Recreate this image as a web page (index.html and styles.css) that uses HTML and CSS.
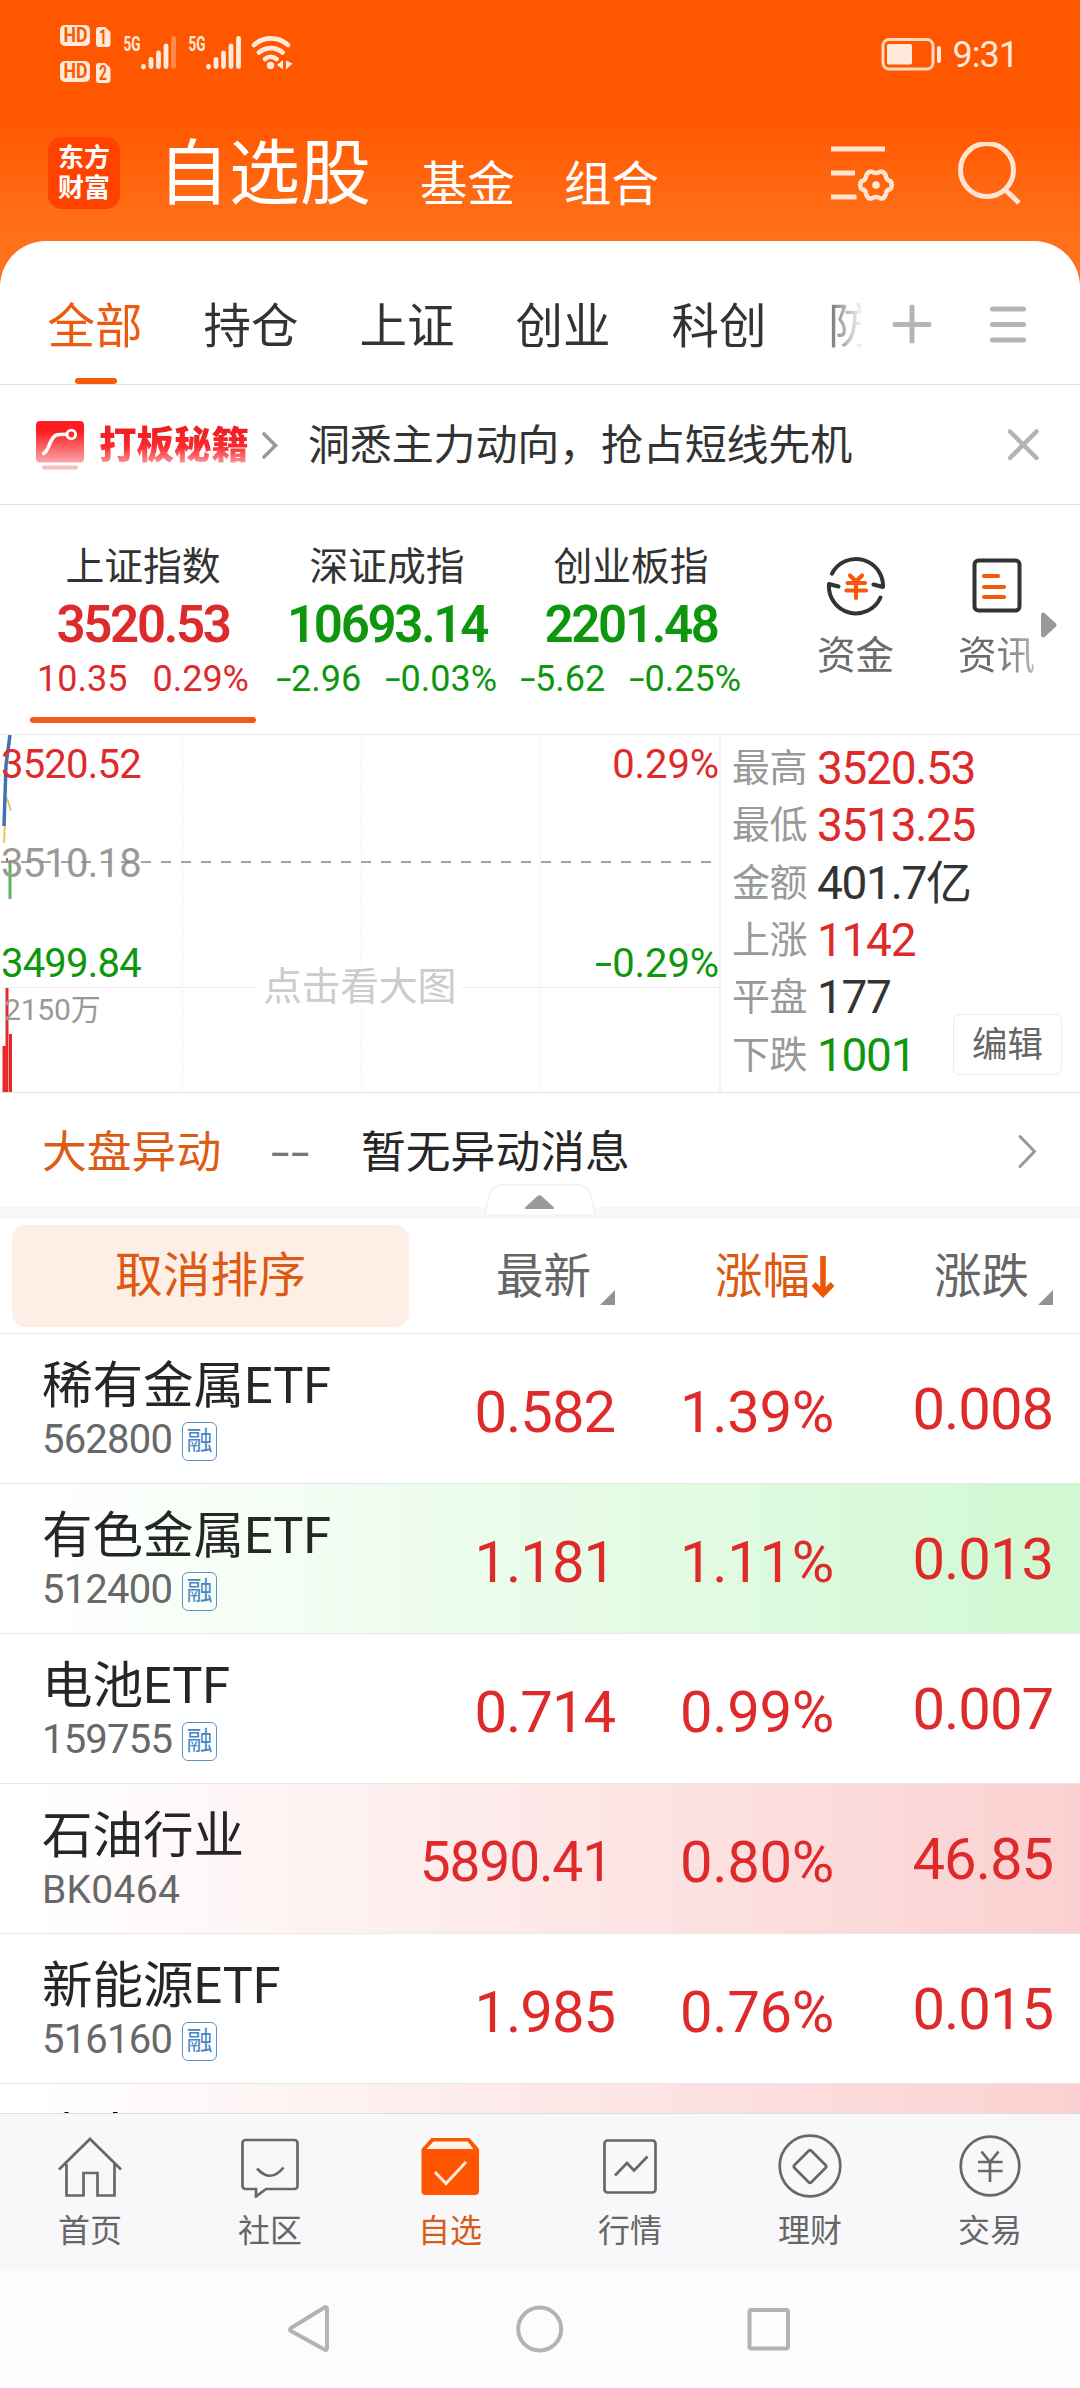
FILE: index.html
```html
<!DOCTYPE html>
<html lang="zh-CN">
<head>
<meta charset="utf-8">
<title>自选股</title>
<link rel="stylesheet" href="styles.css">
</head>
<body>
<div class="app">
  <header class="header">
    <div class="status">
      <svg class="status-left" width="236" height="64" viewBox="58 22 236 64">
        <g class="badge-shape">
          <rect x="60" y="25" width="30" height="21" rx="5"/>
          <path d="M99 27h6l5.500 5v12a3 3 0 0 1-3 3h-8.500a3 3 0 0 1-3-3v-14a3 3 0 0 1 3-3z"/>
          <rect x="60" y="61" width="30" height="21" rx="5"/>
          <path d="M99 63h6l5.500 5v12a3 3 0 0 1-3 3h-8.500a3 3 0 0 1-3-3v-14a3 3 0 0 1 3-3z"/>
        </g>
        <g class="badge-text">
          <text x="63.500" y="42" textLength="24" lengthAdjust="spacingAndGlyphs">HD</text>
          <text x="99" y="43.500" textLength="8" lengthAdjust="spacingAndGlyphs">1</text>
          <text x="63.500" y="78" textLength="24" lengthAdjust="spacingAndGlyphs">HD</text>
          <text x="99" y="79.500" textLength="8" lengthAdjust="spacingAndGlyphs">2</text>
        </g>
        <g class="net-text">
          <text x="123.500" y="51" textLength="17" lengthAdjust="spacingAndGlyphs">5G</text>
          <text x="188.500" y="51" textLength="17" lengthAdjust="spacingAndGlyphs">5G</text>
        </g>
        <g class="bars">
          <path d="M143.500 66.500v.5M151 59.500v7M158.500 53v13.500M166 46v20.500M208.500 66.500v.5M216 59.500v7M223.500 53v13.500M231 46v20.500M238.500 38.500v28"/>
          <path opacity=".35" d="M173.500 38.500v28"/>
        </g>
        <g class="wifi">
          <path d="M254 45a25 25 0 0 1 34 0M259 52.500a18 18 0 0 1 23.500 0M265 59a9 9 0 0 1 11.500 0"/>
          <circle cx="270.500" cy="65.500" r="3.700"/>
          <path class="fill" d="M283 60v9.500l-6-4.500zM286 60.500v9l6.500-6z"/>
        </g>
      </svg>
      <div class="status-right">
        <svg width="60" height="34" viewBox="881 36 60 34">
          <rect class="cell" x="883" y="38.500" width="50" height="29.500" rx="6"/>
          <rect class="solid" x="887" y="43" width="25" height="20.500" rx="2"/>
          <rect class="solid" x="937" y="45" width="4" height="17" rx="2"/>
        </svg>
        <span class="clock">9:31</span>
      </div>
    </div>
    <div class="titlebar">
      <div class="logo"><span>东方</span><span>财富</span></div>
      <h1>自选股</h1>
      <span class="sub">基金</span>
      <span class="sub">组合</span>
      <svg class="head-icons" width="192" height="68" viewBox="829 142 192 68">
        <path class="bar5" d="M831 149h54M831 173h24M831 197h25.500"/>
        <path class="gear" d="M871.500 171.500Q876 174.500 880.500 171.500Q885 171.300 886.200 177.300Q886.700 180.200 890.300 181Q893.400 185 890.300 189Q886.700 189.800 886.200 192.700Q885 198.700 880.500 198.500Q876 195.500 871.500 198.500Q867 198.700 865.800 192.700Q865.300 189.800 861.700 189Q858.600 185 861.700 181Q865.300 180.200 865.800 177.300Q867 171.300 871.500 171.500Z"/>
        <circle class="dot" cx="876" cy="185" r="3.800"/>
        <circle class="lens" cx="987" cy="170" r="26.500"/>
        <path class="lens" d="M1005 189.500l14 13.500"/>
      </svg>
    </div>
  </header>

  <main class="sheet">
    <nav class="tabs">
      <div class="tab-list">
        <a class="active">全部</a><a>持仓</a><a>上证</a><a>创业</a><a>科创</a><a>防</a>
      </div>
      <svg width="140" height="46" viewBox="890 301 140 46">
        <path class="gray5" d="M895 324.500h34M912 307v34M992.500 309h31M992.500 324.500h31M992.500 340h31"/>
      </svg>
    </nav>

    <section class="promo">
      <svg width="50" height="50" viewBox="35 419 50 50">
        <defs><linearGradient id="promoRed" x1="0" y1="0" x2="0" y2="1"><stop offset=".25" stop-color="#fd1c20"/><stop offset="1" stop-color="#fba5a8"/></linearGradient></defs>
        <rect x="36" y="420" width="48" height="41.500" rx="4" fill="url(#promoRed)"/>
        <path d="M43.500 452.500c7-4 5-15 13-18.500q3-.8 10-.8" fill="none" stroke="#fff" stroke-width="3.600" stroke-linecap="round"/>
        <circle cx="71.300" cy="433.500" r="4.300" fill="none" stroke="#fff" stroke-width="2.800"/>
        <rect x="42" y="464.500" width="36" height="4" rx="2" fill="#f8bfc1"/>
      </svg>
      <b class="promo-name">打板秘籍</b>
      <svg class="promo-arrow" width="18" height="30" viewBox="262 430 18 30"><path d="M265 434l11.500 11.500L265 457"/></svg>
      <span class="promo-text">洞悉主力动向，抢占短线先机</span>
      <svg class="close" width="32" height="32" viewBox="1008 430 32 32"><path class="gray4" d="M1011 432.500l26.500 26.500M1037.500 432.500L1011 459"/></svg>
    </section>

    <section class="indices">
      <div class="index on up">
        <span class="index-name">上证指数</span><strong>3520.53</strong>
        <span class="delta"><i>10.35</i><i>0.29%</i></span>
      </div>
      <div class="index down">
        <span class="index-name">深证成指</span><strong>10693.14</strong>
        <span class="delta"><i><em>-</em>2.96</i><i><em>-</em>0.03%</i></span>
      </div>
      <div class="index down">
        <span class="index-name">创业板指</span><strong>2201.48</strong>
        <span class="delta"><i><em>-</em>5.62</i><i><em>-</em>0.25%</i></span>
      </div>
      <div class="tool funds">
        <svg width="62" height="62" viewBox="825 555 62 62">
          <path class="ink" d="M832 573.600A27 27 0 0 1 883 587L873.500 584.500M880.500 597.500A27 27 0 0 1 829 584L838.500 586.500"/>
          <path class="accent" d="M850 575.500l6 6 6-6M847.500 583h17.500M846.500 590.500h19.500M856 582v16"/>
        </svg>
        <span>资金</span>
      </div>
      <div class="tool news">
        <svg width="50" height="62" viewBox="972 555 50 62">
          <rect class="ink" x="974.500" y="560.500" width="45" height="50" rx="4"/>
          <path class="accent" d="M984 576h14M984 587h20M984 597h20"/>
        </svg>
        <span>资讯</span>
      </div>
      <svg class="more" width="16" height="26" viewBox="0 0 16 26"><path d="M0 3q0-3 3-2.500l12 11q1 1.500 0 3l-12 11q-3 .5-3-2.500z"/></svg>
    </section>

    <section class="market">
      <div class="chart">
        <svg width="719" height="357" viewBox="0 735 719 357">
          <path class="grid-dot" d="M182.500 735v357M361.500 735v357M540.500 735v357"/>
          <path class="grid-line" d="M1 987.500h257M461 987.500h258"/>
          <path class="avg" d="M4 843l1-22M7 798l4 13"/>
          <path class="price" d="M4 826L6 765L10 735"/>
          <path class="vol-up" d="M4 1092v-46M7 1092v-104M10.500 1092v-58"/>
          <path class="tick-up" d="M7 862v-4"/>
          <path class="tick-down" d="M10 862v37"/>
        </svg>
        <span class="lbl red l1">3520.52</span>
        <span class="lbl gray l2">3510.18</span>
        <span class="lbl green l3">3499.84</span>
        <span class="lbl red r1">0.29%</span>
        <span class="lbl green r3"><em>-</em>0.29%</span>
        <span class="lbl vol">2150万</span>
        <span class="lbl hint">点击看大图</span>
        <svg class="base" width="719" height="2" viewBox="0 0 719 2"><path d="M1 1h712"/></svg>
      </div>
      <dl class="stats">
        <div><dt>最高</dt><dd class="up">3520.53</dd></div>
        <div><dt>最低</dt><dd class="up">3513.25</dd></div>
        <div><dt>金额</dt><dd>401.7亿</dd></div>
        <div><dt>上涨</dt><dd class="up">1142</dd></div>
        <div><dt>平盘</dt><dd>177</dd></div>
        <div><dt>下跌</dt><dd class="down">1001</dd></div>
        <button class="edit">编辑</button>
      </dl>
    </section>

    <section class="moves">
      <span class="moves-title">大盘异动</span>
      <span class="moves-time"><em>-</em><em>-</em></span>
      <span class="moves-text">暂无异动消息</span>
      <svg class="moves-arrow" width="22" height="38" viewBox="1017 1131 22 38"><path d="M1020 1135.500l14.500 15-14.500 15"/></svg>
      <svg class="fold" width="114" height="33" viewBox="483 1184 114 33">
        <path class="fold-shape" d="M484.500 1215.500l4-18q3-12.500 14-12.500h75q11 0 14 12.500l4 18z"/>
        <path class="fold-tri" d="M525.500 1209q-1-1 0-2l12-11q2-1.500 4 0l12 11q1 1 0 2z"/>
      </svg>
    </section>

    <section class="list">
      <div class="list-head">
        <button class="unsort">取消排序</button>
        <span class="col c1">最新<svg width="15" height="15" viewBox="0 0 15 15"><path d="M15 0v15H0z"/></svg></span>
        <span class="col c2">涨幅<svg width="24" height="44" viewBox="0 0 24 44"><path class="arrow" d="M12 1v37M2.500 29L12 39l9.500-10"/></svg></span>
        <span class="col c3">涨跌<svg width="15" height="15" viewBox="0 0 15 15"><path d="M15 0v15H0z"/></svg></span>
      </div>
      <div class="row"><div><div class="name">稀有金属ETF</div><div class="code">562800<span class="tag">融</span></div></div><b>0.582</b><b>1.39%</b><b>0.008</b></div>
      <div class="row flash-down"><div><div class="name">有色金属ETF</div><div class="code">512400<span class="tag">融</span></div></div><b>1.181</b><b>1.11%</b><b>0.013</b></div>
      <div class="row"><div><div class="name">电池ETF</div><div class="code">159755<span class="tag">融</span></div></div><b>0.714</b><b>0.99%</b><b>0.007</b></div>
      <div class="row flash-up"><div><div class="name">石油行业</div><div class="code plain">BK0464</div></div><b class="long">5890.41</b><b>0.80%</b><b>46.85</b></div>
      <div class="row"><div><div class="name">新能源ETF</div><div class="code">516160<span class="tag">融</span></div></div><b>1.985</b><b>0.76%</b><b>0.015</b></div>
      <div class="row flash-up cut"><svg width="60" height="2" viewBox="64 0 60 2"><path d="M64.500 0h4v2h-4zM113 0h4.500v2H113z"/></svg></div>
    </section>
  </main>

  <nav class="tabbar">
    <a><svg width="68" height="64" viewBox="0 0 68 64"><path d="M3 35.500L34 5l31 30.500M10.500 30v31.500h17V39h14v22.500h17V30"/></svg>首页</a>
    <a><svg width="68" height="64" viewBox="0 0 68 64"><path d="M9.500 6h49a3 3 0 0 1 3 3v43a3 3 0 0 1-3 3H30l-10 7.500V55h-10.500a3 3 0 0 1-3-3V9a3 3 0 0 1 3-3z"/><path d="M21 34.500q13.500 15 26.500-1"/></svg>社区</a>
    <a class="active"><svg width="68" height="64" viewBox="0 0 68 64"><path class="box" d="M15.500 4h38l9.500 11v42a4 4 0 0 1-4 4H9.500a4 4 0 0 1-4-4V15z"/><path class="lid" d="M17.500 7.500h34l6 7.500h-47z"/><path class="check" d="M19 38l11 11.500L50 28"/></svg>自选</a>
    <a><svg width="68" height="64" viewBox="0 0 68 64"><rect x="8.500" y="6.500" width="51" height="52" rx="3"/><path d="M19 41.500l12-12.500 7 7.500 13.500-14"/></svg>行情</a>
    <a><svg width="68" height="64" viewBox="0 0 68 64"><circle cx="34" cy="32" r="30.300"/><path d="M32.500 17q1.500-1.500 3 0l14 14q1.500 1.500 0 3l-14 14q-1.500 1.500-3 0l-14-14q-1.500-1.500 0-3z"/></svg>理财</a>
    <a><svg width="68" height="64" viewBox="0 0 68 64"><circle cx="34" cy="32" r="29.300"/><path d="M25.500 17.500L34 28l8.500-10.500M22 28h24.500M22 37h24.500M34 28v20"/></svg>交易</a>
  </nav>
  <footer class="sysnav">
    <svg width="504" height="50" viewBox="287 2304 504 50">
      <path d="M327 2309v39q0 3-2.500 1.500L291 2331q-2-1.500 0-3l33.500-20.500Q327 2306 327 2309z"/>
      <circle cx="539.700" cy="2329" r="21.500"/>
      <rect x="749.500" y="2310" width="38.500" height="38.500" rx="2"/>
    </svg>
  </footer>
</div>
</body>
</html>
```
FILE: styles.css
```css
* { box-sizing: border-box; margin: 0; padding: 0; }
body { width: 1080px; background: #fff; font-family: Roboto, "Noto Sans CJK SC", sans-serif; color: #333; }
svg { display: block; flex: none; }
i, em { font-style: normal; }
button { border: 0; background: none; font: inherit; }
.app { width: 1080px; height: 2388px; overflow: hidden; display: flex; flex-direction: column; }

/* Header */
.header { height: 290px; margin-bottom: -49px; flex: none; background: linear-gradient(#ff5700 0, #ff5700 118px, #ff6d16 215px, #ff711c 250px); }
.status { height: 106px; padding: 22px 62px 0 58px; display: flex; justify-content: space-between; align-items: flex-start; }
.badge-shape, .net-text, .solid, .dot, .fill { fill: #ffe9da; }
.badge-text { fill: #ff5700; font-size: 20px; font-weight: 700; }
.net-text { font-size: 20px; font-weight: 700; }
.bars path { stroke: #ffe9da; stroke-width: 4.8; stroke-linecap: round; }
.wifi { fill: #ffe9da; }
.wifi path:not(.fill) { fill: none; stroke: #ffe9da; stroke-width: 4.6; stroke-linecap: round; }
.status-right { display: flex; align-items: center; gap: 12px; padding-top: 14px; }
.cell { fill: none; stroke: #ffd9bf; stroke-width: 3; }
.clock { font-size: 36px; line-height: 34px; letter-spacing: -1px; color: #ffe9da; padding-top: 2px; }
.titlebar { height: 135px; padding-left: 48px; display: flex; align-items: flex-start; color: #fff; }
.logo { width: 72px; height: 72px; margin-top: 31px; padding-top: 7px; border-radius: 14px; background: #ff4200; display: flex; flex-direction: column; align-items: center; font-size: 26px; font-weight: 700; line-height: 29.5px; }
h1 { margin: 23px 0 0 38px; font-size: 71px; font-weight: 400; line-height: 90px; width: 262px; }
.sub { margin-top: 49px; font-size: 47.500px; line-height: 60px; width: 144px; white-space: nowrap; }
.sub + .sub { width: 265px; }
.head-icons { margin-top: 36px; fill: none; }
.bar5, .lens { stroke: #ffe4d1; stroke-width: 5; }
.gear { stroke: #ffe4d1; stroke-width: 4.5; stroke-linejoin: round; }

/* Sheet */
.sheet { position: relative; height: 1872px; flex: none; overflow: hidden; background: #fff; border-radius: 46px 46px 0 0; }
.tabs { height: 144px; border-bottom: 1px solid #e0e0e2; padding-left: 17px; display: flex; align-items: flex-start; }
.tab-list { width: 845px; height: 143px; display: flex; overflow: hidden; mask-image: linear-gradient(90deg, #000 795px, transparent 847px); }
.tab-list a { flex: none; width: 156px; height: 143px; padding-top: 56px; text-align: center; font-size: 47.500px; line-height: 60px; }
.tab-list a:last-child { text-align: left; padding-left: 31px; }
.tab-list .active { color: #ec5a10; display: flex; flex-direction: column; align-items: center; gap: 21px; }
.tab-list .active::after { content: ""; width: 42px; height: 6px; margin-right: -1px; border-radius: 3px; background: #f55a0a; }
.tabs > svg { margin: 60px 0 0 28px; }
.gray5 { stroke: #b4b4b4; stroke-width: 5; stroke-linecap: round; }
.gray4 { stroke: #b4b4b4; stroke-width: 4.5; stroke-linecap: round; }
.promo { height: 120px; padding: 0 41px 0 35px; border-bottom: 1px solid #e4e4e6; display: flex; align-items: center; }
.promo-name { margin-left: 14px; font-size: 37.500px; line-height: 60px; font-weight: 900; color: transparent; background: linear-gradient(#f02025 20px, #fd2b30 32px, #fba0a3 50px); background-clip: text; -webkit-background-clip: text; }
.promo-arrow { margin-left: 12px; fill: none; stroke: #999; stroke-width: 3.600; stroke-linecap: round; }
.promo-text { margin-left: 29px; padding-top: 3px; font-size: 42px; line-height: 60px; letter-spacing: -.15px; }
.close { margin-left: auto; }

/* Indices */
.indices { position: relative; height: 229px; padding-left: 21px; display: flex; }
.index { width: 244px; display: flex; flex-direction: column; align-items: center; padding-top: 36px; }
.index.on::after { content: ""; width: 226px; height: 6px; margin-top: 16px; border-radius: 3px; background: #f15b12; }
.index-name { font-size: 38.800px; line-height: 52px; white-space: nowrap; color: #333; }
.index strong { margin-top: 6px; font-size: 51px; line-height: 52px; font-weight: 600; letter-spacing: -.045em; }
.delta { margin-top: 6px; display: flex; gap: 25px; font-size: 36px; line-height: 44px; white-space: nowrap; }
em { display: inline-block; transform: scaleX(1.55); margin: 0 .07em 0 .05em; }
.up, .red { color: #dd2b2b; }
.down, .green { color: #0e970e; }
.tool { display: flex; flex-direction: column; align-items: center; padding-top: 50px; font-size: 38.500px; line-height: 48px; color: #6b6b6b; gap: 15px; }
.funds { margin-left: 64px; }
.news { margin-left: 64px; }
.news span { background: linear-gradient(90deg, #6b6b6b 50%, #bbb); background-clip: text; -webkit-background-clip: text; color: transparent; }
.ink { fill: none; stroke: #333; stroke-width: 4; stroke-linejoin: round; stroke-linecap: round; }
.accent { fill: none; stroke: #f7590a; stroke-width: 4.200; stroke-linecap: round; }
.more { position: absolute; left: 1041px; top: 107px; fill: #999; }

/* Intraday chart */
.market { height: 359px; display: flex; border-top: 1px solid #ebebeb; border-bottom: 1px solid #e4e4e7; }
.chart { position: relative; width: 721px; border-right: 2px solid #f3f3f6; }
.grid-dot { stroke: #e6e6e8; stroke-dasharray: 1.5 2; }
.grid-line { stroke: #ebebeb; stroke-width: 1; }
.chart path { fill: none; }
.avg { stroke: #f0c060; stroke-width: 2; }
.price { stroke: #3f72b4; stroke-width: 3.500; }
.vol-up { stroke: #e62a2a; stroke-width: 3; }
.tick-up { stroke: #dd5555; stroke-width: 2; }
.tick-down { stroke: #5cb35c; stroke-width: 3; }
.base { position: absolute; left: 0; top: 126px; stroke: #858585; stroke-width: 1.700; stroke-dasharray: 10 10; }
.lbl { position: absolute; left: 1px; font-size: 40px; line-height: 40px; letter-spacing: -.8px; white-space: nowrap; }
.l1, .r1 { top: 10px; }
.l2 { top: 109px; }
.l3, .r3 { top: 209px; }
.r1, .r3 { left: auto; right: 0; letter-spacing: -.1px; }
.gray { color: #999; }
.vol { left: 4px; top: 255px; font-size: 30px; color: #999; letter-spacing: -.2px; }
.hint { left: 257px; top: 230px; padding: 0 6px; background: #fff; font-size: 39px; line-height: 44px; color: #ccc; letter-spacing: -.4px; }

.stats { position: relative; padding: 5px 0 0 11px; }
.stats div { height: 57.300px; display: flex; align-items: center; }
.stats dt { width: 85px; font-size: 38px; line-height: 57px; letter-spacing: -.5px; color: #999; }
.stats dd { font-size: 46px; line-height: 57px; letter-spacing: -1.3px; white-space: nowrap; }
.edit { position: absolute; left: 232px; top: 279px; width: 109px; height: 61px; border: 1.500px solid #ececee; border-radius: 6px; font-size: 35.500px; line-height: 58px; padding-top: 1px; color: #666; }

/* Market moves */
.moves { position: relative; height: 126px; padding: 6px 41px 0 42px; border-bottom: 12px solid #f5f7fb; display: flex; align-items: center; font-size: 44.800px; line-height: 60px; }
.moves-title { color: #dd5c15; width: 230px; }
.moves-time { color: #777; width: 89px; display: flex; gap: 6px; }
.moves-time em { transform: scaleX(1.500); margin: 0 0 0 2px; }
.moves-text { color: #262626; }
.moves-arrow { margin-left: auto; margin-top: -5px; fill: none; stroke: #999; stroke-width: 3; stroke-linecap: round; }
.fold { position: absolute; left: 483px; top: 91px; }
.fold-shape { fill: #fff; stroke: #f2f3f6; stroke-width: 2; }
.fold-tri { fill: #999; }

/* Watchlist */
.list-head { height: 115px; border-bottom: 1px solid #e8e8ea; padding: 6px 0 0 12px; display: flex; color: #666; font-size: 47.500px; line-height: 60px; }
.unsort { width: 397px; height: 102px; border-radius: 14px; background: #fdeee6; color: #dc5a12; font-size: 47.800px; line-height: 60px; }
.col { display: flex; align-items: center; padding-bottom: 5px; white-space: nowrap; }
.c1 { margin-left: 87px; width: 219px; }
.c2 { width: 219px; color: #dc5a12; }
.c3 svg, .c1 svg { margin: 42px 0 0 9px; fill: #939396; }
.c2 svg { margin-left: 1px; }
.arrow { fill: none; stroke: #ec5705; stroke-width: 5.500; }
.row { height: 150px; padding: 0 27px 0 42px; border-bottom: 1px solid #e8e8ea; display: grid; grid-template-columns: 372px 201px 219px 219px; align-items: center; }
.row > div { padding-top: 3px; white-space: nowrap; }
.row b { text-align: right; font-weight: 400; font-size: 58px; line-height: 70px; letter-spacing: -.018em; color: #de2a2a; padding-top: 7px; }
.row b:nth-child(3) { letter-spacing: -.005em; }
.row b:last-child { padding: 0; }
.row b.long { font-size: 55px; letter-spacing: -.02em; padding-right: 3px; }
.name { font-size: 50.500px; line-height: 60px; color: #262626; }
.code { display: flex; align-items: center; font-size: 40px; line-height: 48px; letter-spacing: -.8px; color: #686868; }
.plain { font-size: 39px; letter-spacing: .3px; }
.tag { width: 35px; height: 39px; margin: 2px 0 0 10px; border: 1.500px solid #5a93cc; border-radius: 6px; color: #4586c6; font-size: 26px; line-height: 36px; text-align: center; letter-spacing: 0; }
.flash-down { background: linear-gradient(90deg, #fff 3%, #d0f8d1); }
.flash-up { background: linear-gradient(90deg, #fff 3%, #fbd0d0); }
.row.cut { height: 30px; align-items: end; padding-left: 64px; border: 0; }

/* Bottom bars */
.tabbar { height: 157px; flex: none; border-top: 1px solid #dedee1; background: #f8f8fa; display: grid; grid-template-columns: repeat(6, 1fr); }
.tabbar a { display: flex; flex-direction: column; align-items: center; padding-top: 20px; font-size: 32px; line-height: 44px; color: #666; gap: 11px; }
.tabbar svg { fill: none; stroke: #686868; stroke-width: 2.700; }
.tabbar .active { color: #d85c18; }
.tabbar .box { fill: #ff5500; stroke: none; }
.tabbar .lid { fill: #fff4ee; stroke: none; }
.tabbar .check { stroke: #ffe9da; stroke-width: 3; }
.sysnav { height: 118px; background: #fcfcfc; padding: 34px 0 0 287px; }
.sysnav svg { fill: none; stroke: #b3b3b3; stroke-width: 4; }
```
